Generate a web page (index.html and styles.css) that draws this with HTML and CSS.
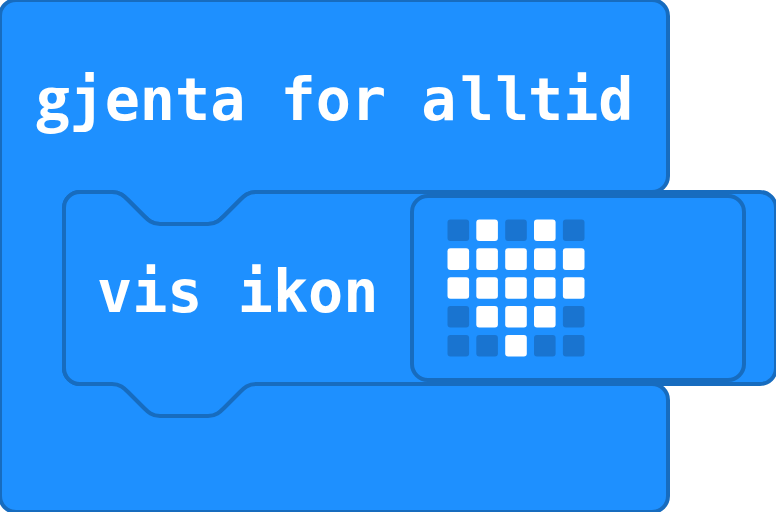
FILE: index.html
```
<!DOCTYPE html>
<html lang="nb">
<head>
<meta charset="utf-8">
<title>gjenta for alltid</title>
<link rel="stylesheet" href="styles.css">
</head>
<body>
<svg class="workspace" width="776" height="512" viewBox="0 0 776 512">
  <defs>
    <rect id="led" width="21.6" height="21.6" rx="3"/>
  </defs>
  <path class="block" d="M16 0H652a16 16 0 0 1 16 16V176a16 16 0 0 1-16 16H256c-8 0-12 4-16 8l-16 16c-4 4-8 8-16 8H160c-8 0-12-4-16-8l-16-16c-4-4-8-8-16-8H80a16 16 0 0 0-16 16V368a16 16 0 0 0 16 16H652a16 16 0 0 1 16 16V496a16 16 0 0 1-16 16H16a16 16 0 0 1-16-16V16A16 16 0 0 1 16 0z"/>
  <path class="block" d="M80 192H112c8 0 12 4 16 8l16 16c4 4 8 8 16 8H208c8 0 12-4 16-8l16-16c4-4 8-8 16-8H760a16 16 0 0 1 16 16V368a16 16 0 0 1-16 16H256c-8 0-12 4-16 8l-16 16c-4 4-8 8-16 8H160c-8 0-12-4-16-8l-16-16c-4-4-8-8-16-8H80a16 16 0 0 1-16-16V208a16 16 0 0 1 16-16z"/>
  <rect class="block" x="412" y="196" width="332" height="184" rx="16"/>
  <text class="label" x="32" y="120" xml:space="preserve"><tspan class="round" x="36.5">g</tspan><tspan x="69.5">jenta for a</tspan><tspan class="slab" x="456 491.2">ll</tspan><tspan x="528">tid</tspan></text>
  <text class="label" x="97" y="312">vis ikon</text>
  <g class="off">
    <use href="#led" x="447.5" y="219.5"/><use href="#led" x="505.2" y="219.5"/><use href="#led" x="562.9" y="219.5"/>
    <use href="#led" x="447.5" y="306"/><use href="#led" x="562.9" y="306"/>
    <use href="#led" x="447.5" y="334.9"/><use href="#led" x="476.3" y="334.9"/><use href="#led" x="534" y="334.9"/><use href="#led" x="562.9" y="334.9"/>
  </g>
  <g class="on">
    <use href="#led" x="476.3" y="219.5"/><use href="#led" x="534" y="219.5"/>
    <use href="#led" x="447.5" y="248.3"/><use href="#led" x="476.3" y="248.3"/><use href="#led" x="505.2" y="248.3"/><use href="#led" x="534" y="248.3"/><use href="#led" x="562.9" y="248.3"/>
    <use href="#led" x="447.5" y="277.2"/><use href="#led" x="476.3" y="277.2"/><use href="#led" x="505.2" y="277.2"/><use href="#led" x="534" y="277.2"/><use href="#led" x="562.9" y="277.2"/>
    <use href="#led" x="476.3" y="306"/><use href="#led" x="505.2" y="306"/><use href="#led" x="534" y="306"/>
    <use href="#led" x="505.2" y="334.9"/>
  </g>
</svg>
</body>
</html>
```
FILE: styles.css
```
body {
  margin: 0;
  background: #fff;
  overflow: hidden;
}

.workspace {
  display: block;
}

.block {
  fill: #1e90ff;
  stroke: #176cbf;
  stroke-width: 4;
}

.label {
  fill: #fff;
  font: bold 58.45px "DejaVu Sans Mono", monospace;
}

.round {
  font-family: "Open Sans", sans-serif;
}

.slab {
  font-family: "Liberation Mono", monospace;
  font-size: 60.5px;
}

.off {
  fill: #1974d0;
}

.on {
  fill: #fff;
}
```
